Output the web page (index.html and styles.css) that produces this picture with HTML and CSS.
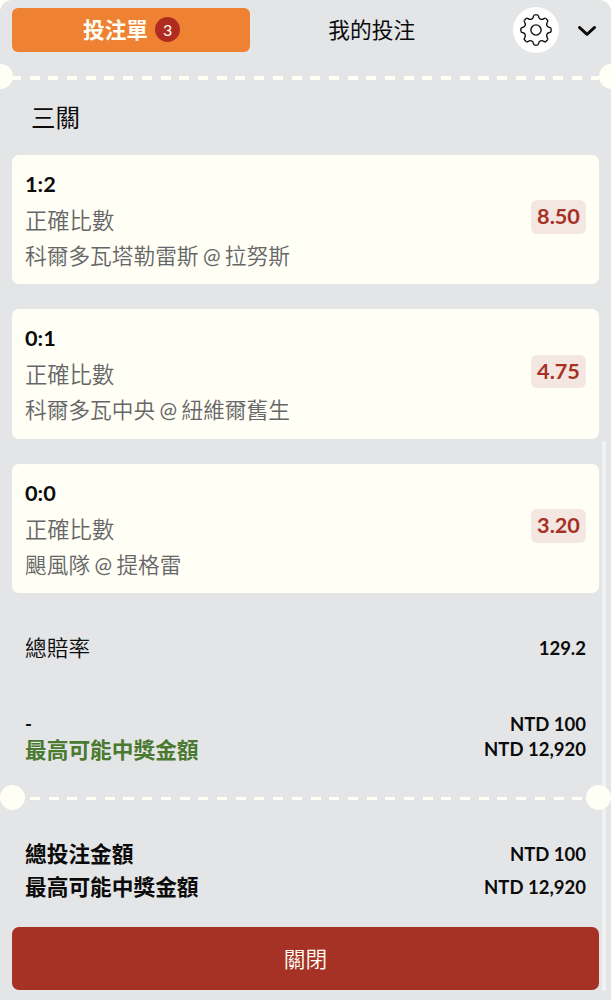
FILE: index.html
```html
<!DOCTYPE html>
<html lang="zh-Hant">
<head>
  <meta charset="UTF-8">
  <meta name="viewport" content="width=device-width, initial-scale=1.0">
  <title>投注單</title>
  <link rel="stylesheet" href="styles.css">
</head>
<body>
  <div class="betslip">
    <!-- Tabs -->
    <header class="tabs">
      <button class="tab tab-active">投注單<span class="count">3</span></button>
      <button class="tab">我的投注</button>
      <button class="settings" aria-label="設定">
        <svg width="34" height="34" viewBox="-17 -17 34 34" fill="none" stroke="#111" stroke-width="1.4">
          <defs>
            <path id="tooth" d="M-1.2-15.1H1.2Q2.2-15.1 2.5-13.6C3.1-10.8 5.5-9.8 7.85-11.38Q9.19-12.23 9.83-11.53"/>
          </defs>
          <use href="#tooth"/>
          <use href="#tooth" transform="rotate(45)"/>
          <use href="#tooth" transform="rotate(90)"/>
          <use href="#tooth" transform="rotate(135)"/>
          <use href="#tooth" transform="rotate(180)"/>
          <use href="#tooth" transform="rotate(225)"/>
          <use href="#tooth" transform="rotate(270)"/>
          <use href="#tooth" transform="rotate(315)"/>
          <circle r="5.1"/>
        </svg>
      </button>
      <button class="collapse" aria-label="收起">
        <svg width="20" height="12" viewBox="0 0 20 12" fill="none" stroke="#0b0b0b" stroke-width="2.8" stroke-linecap="round" stroke-linejoin="round">
          <path d="M2.4 2.4L10 9.4L17.6 2.4"/>
        </svg>
      </button>
    </header>

    <div class="divider divider-edge">
      <span class="notch"></span>
      <span class="dashes"></span>
      <span class="notch"></span>
    </div>

    <h2 class="title">三關</h2>

    <!-- Selections -->
    <div class="selections">
      <div class="card">
        <div class="pick">
          <strong>1:2</strong>
          <span class="market">正確比數</span>
          <span class="teams">科爾多瓦塔勒雷斯 <span class="at">@</span> 拉努斯</span>
        </div>
        <div class="odds">8.50</div>
      </div>
      <div class="card">
        <div class="pick">
          <strong>0:1</strong>
          <span class="market">正確比數</span>
          <span class="teams">科爾多瓦中央 <span class="at">@</span> 紐維爾舊生</span>
        </div>
        <div class="odds">4.75</div>
      </div>
      <div class="card">
        <div class="pick">
          <strong>0:0</strong>
          <span class="market">正確比數</span>
          <span class="teams">颶風隊 <span class="at">@</span> 提格雷</span>
        </div>
        <div class="odds">3.20</div>
      </div>
    </div>

    <!-- Stake and payout -->
    <div class="row total-odds">
      <span class="label">總賠率</span>
      <span class="value">129.2</span>
    </div>
    <div class="stake">
      <div class="row">
        <span class="value">-</span>
        <span class="value">NTD 100</span>
      </div>
      <div class="row">
        <span class="label payout">最高可能中獎金額</span>
        <span class="value">NTD 12,920</span>
      </div>
    </div>

    <div class="divider">
      <span class="notch"></span>
      <span class="dashes"></span>
      <span class="notch"></span>
    </div>

    <div class="summary">
      <div class="row">
        <span class="label">總投注金額</span>
        <span class="value">NTD 100</span>
      </div>
      <div class="row">
        <span class="label">最高可能中獎金額</span>
        <span class="value">NTD 12,920</span>
      </div>
    </div>

    <button class="close">關閉</button>
    <div class="scrollbar"></div>
  </div>
</body>
</html>
```
FILE: styles.css
```css
:root {
  --bg-color: #e4e5e7;
  --cream: #fffff6;
  --orange: #ee8132;
  --red: #a53225;
  --green: #4a7a30;
}

* {
  box-sizing: border-box;
}

body {
  margin: 0;
  background: var(--cream);
  color: #0b0b0b;
  font-family: Lato, "Noto Sans CJK TC", sans-serif;
  font-size: 21.7px;
}

button {
  padding: 0;
  border: none;
  background: none;
  color: inherit;
  font: inherit;
  cursor: pointer;
}

svg {
  display: block;
}

.betslip {
  position: relative;
  height: 1000px;
  overflow: hidden;
  border-radius: 12px 12px 0 0;
  background: var(--bg-color);
}

.tabs {
  display: flex;
  align-items: center;
  height: 64px;
  padding: 0 14px 4px 12px;
}

.tab {
  display: flex;
  align-items: center;
  justify-content: center;
  gap: 7px;
  width: 243.5px;
  height: 43.5px;
  padding-bottom: 3px;
  border-radius: 6px;
}

.tab-active {
  width: 238px;
  padding-left: 1px;
  background: var(--orange);
  color: var(--cream);
  font-weight: 700;
}

.count {
  width: 25px;
  height: 25px;
  margin-top: 2px;
  border-radius: 50%;
  background: #b02c20;
  font-size: 16px;
  font-weight: 400;
  line-height: 25px;
  text-align: center;
}

.settings {
  display: flex;
  align-items: center;
  justify-content: center;
  width: 46.5px;
  height: 46.5px;
  margin-left: 19px;
  border-radius: 50%;
  background: #fff;
}

.collapse {
  margin: 2px 0 0 auto;
}

.divider {
  display: flex;
  align-items: center;
  justify-content: space-between;
  height: 25px;
}

.divider-edge {
  margin: 0 -12.5px;
}

.notch {
  flex: none;
  width: 25px;
  height: 25px;
  border-radius: 50%;
  background: var(--cream);
}

.dashes {
  flex: 1;
  height: 3.5px;
  margin: 3px 0 0 5px;
  background: repeating-linear-gradient(90deg, var(--cream) 0 10px, transparent 10px 18.7px);
}

.divider-edge .dashes {
  margin-left: -1.2px;
}

.title {
  height: 65.5px;
  margin: 0;
  padding: 12px 0 0 31px;
  font-size: 24.5px;
  font-weight: 400;
  line-height: 34px;
}

.selections {
  display: flex;
  flex-direction: column;
  gap: 25px;
  padding: 0 12px;
}

.card {
  display: flex;
  align-items: center;
  justify-content: space-between;
  height: 129.5px;
  padding: 0 13px 5px;
  border-radius: 7px;
  background: var(--cream);
}

.pick {
  display: flex;
  flex-direction: column;
  padding-top: 6px;
  color: #666;
  font-weight: 350;
  line-height: 36px;
}

.pick strong {
  color: #0b0b0b;
  font-weight: 700;
}

.market {
  padding-top: 1px;
  font-size: 22.3px;
  line-height: 35px;
}

.teams {
  word-spacing: -1.5px;
}

.at {
  font-size: 21px;
  font-weight: 400;
}

.odds {
  width: 55px;
  height: 33.5px;
  border-radius: 6px;
  background: #f4e6e0;
  color: var(--red);
  font-size: 21.7px;
  font-weight: 700;
  line-height: 33.5px;
  text-align: center;
}

.row {
  display: flex;
  align-items: center;
  justify-content: space-between;
  height: 25px;
  padding: 0 25px;
  line-height: 25px;
}

.value {
  font-size: 18.5px;
  font-weight: 700;
}

.total-odds {
  margin-top: 42.5px;
  font-weight: 350;
}

.stake {
  height: 72.5px;
  margin-top: 51.5px;
}

.payout {
  padding-top: 1px;
  color: var(--green);
  font-weight: 700;
}

.summary {
  padding-top: 28.5px;
  font-weight: 700;
}

.summary .row {
  height: 33px;
}

.close {
  display: block;
  width: 587px;
  height: 63px;
  margin: 23px 0 0 12px;
  padding-bottom: 3px;
  border-radius: 7px;
  background: var(--red);
  color: var(--cream);
  font-weight: 350;
}

.scrollbar {
  position: absolute;
  top: 441px;
  right: 5px;
  width: 4.5px;
  height: 550px;
  border-radius: 2px;
  background: rgba(255, 255, 255, 0.45);
}
```
